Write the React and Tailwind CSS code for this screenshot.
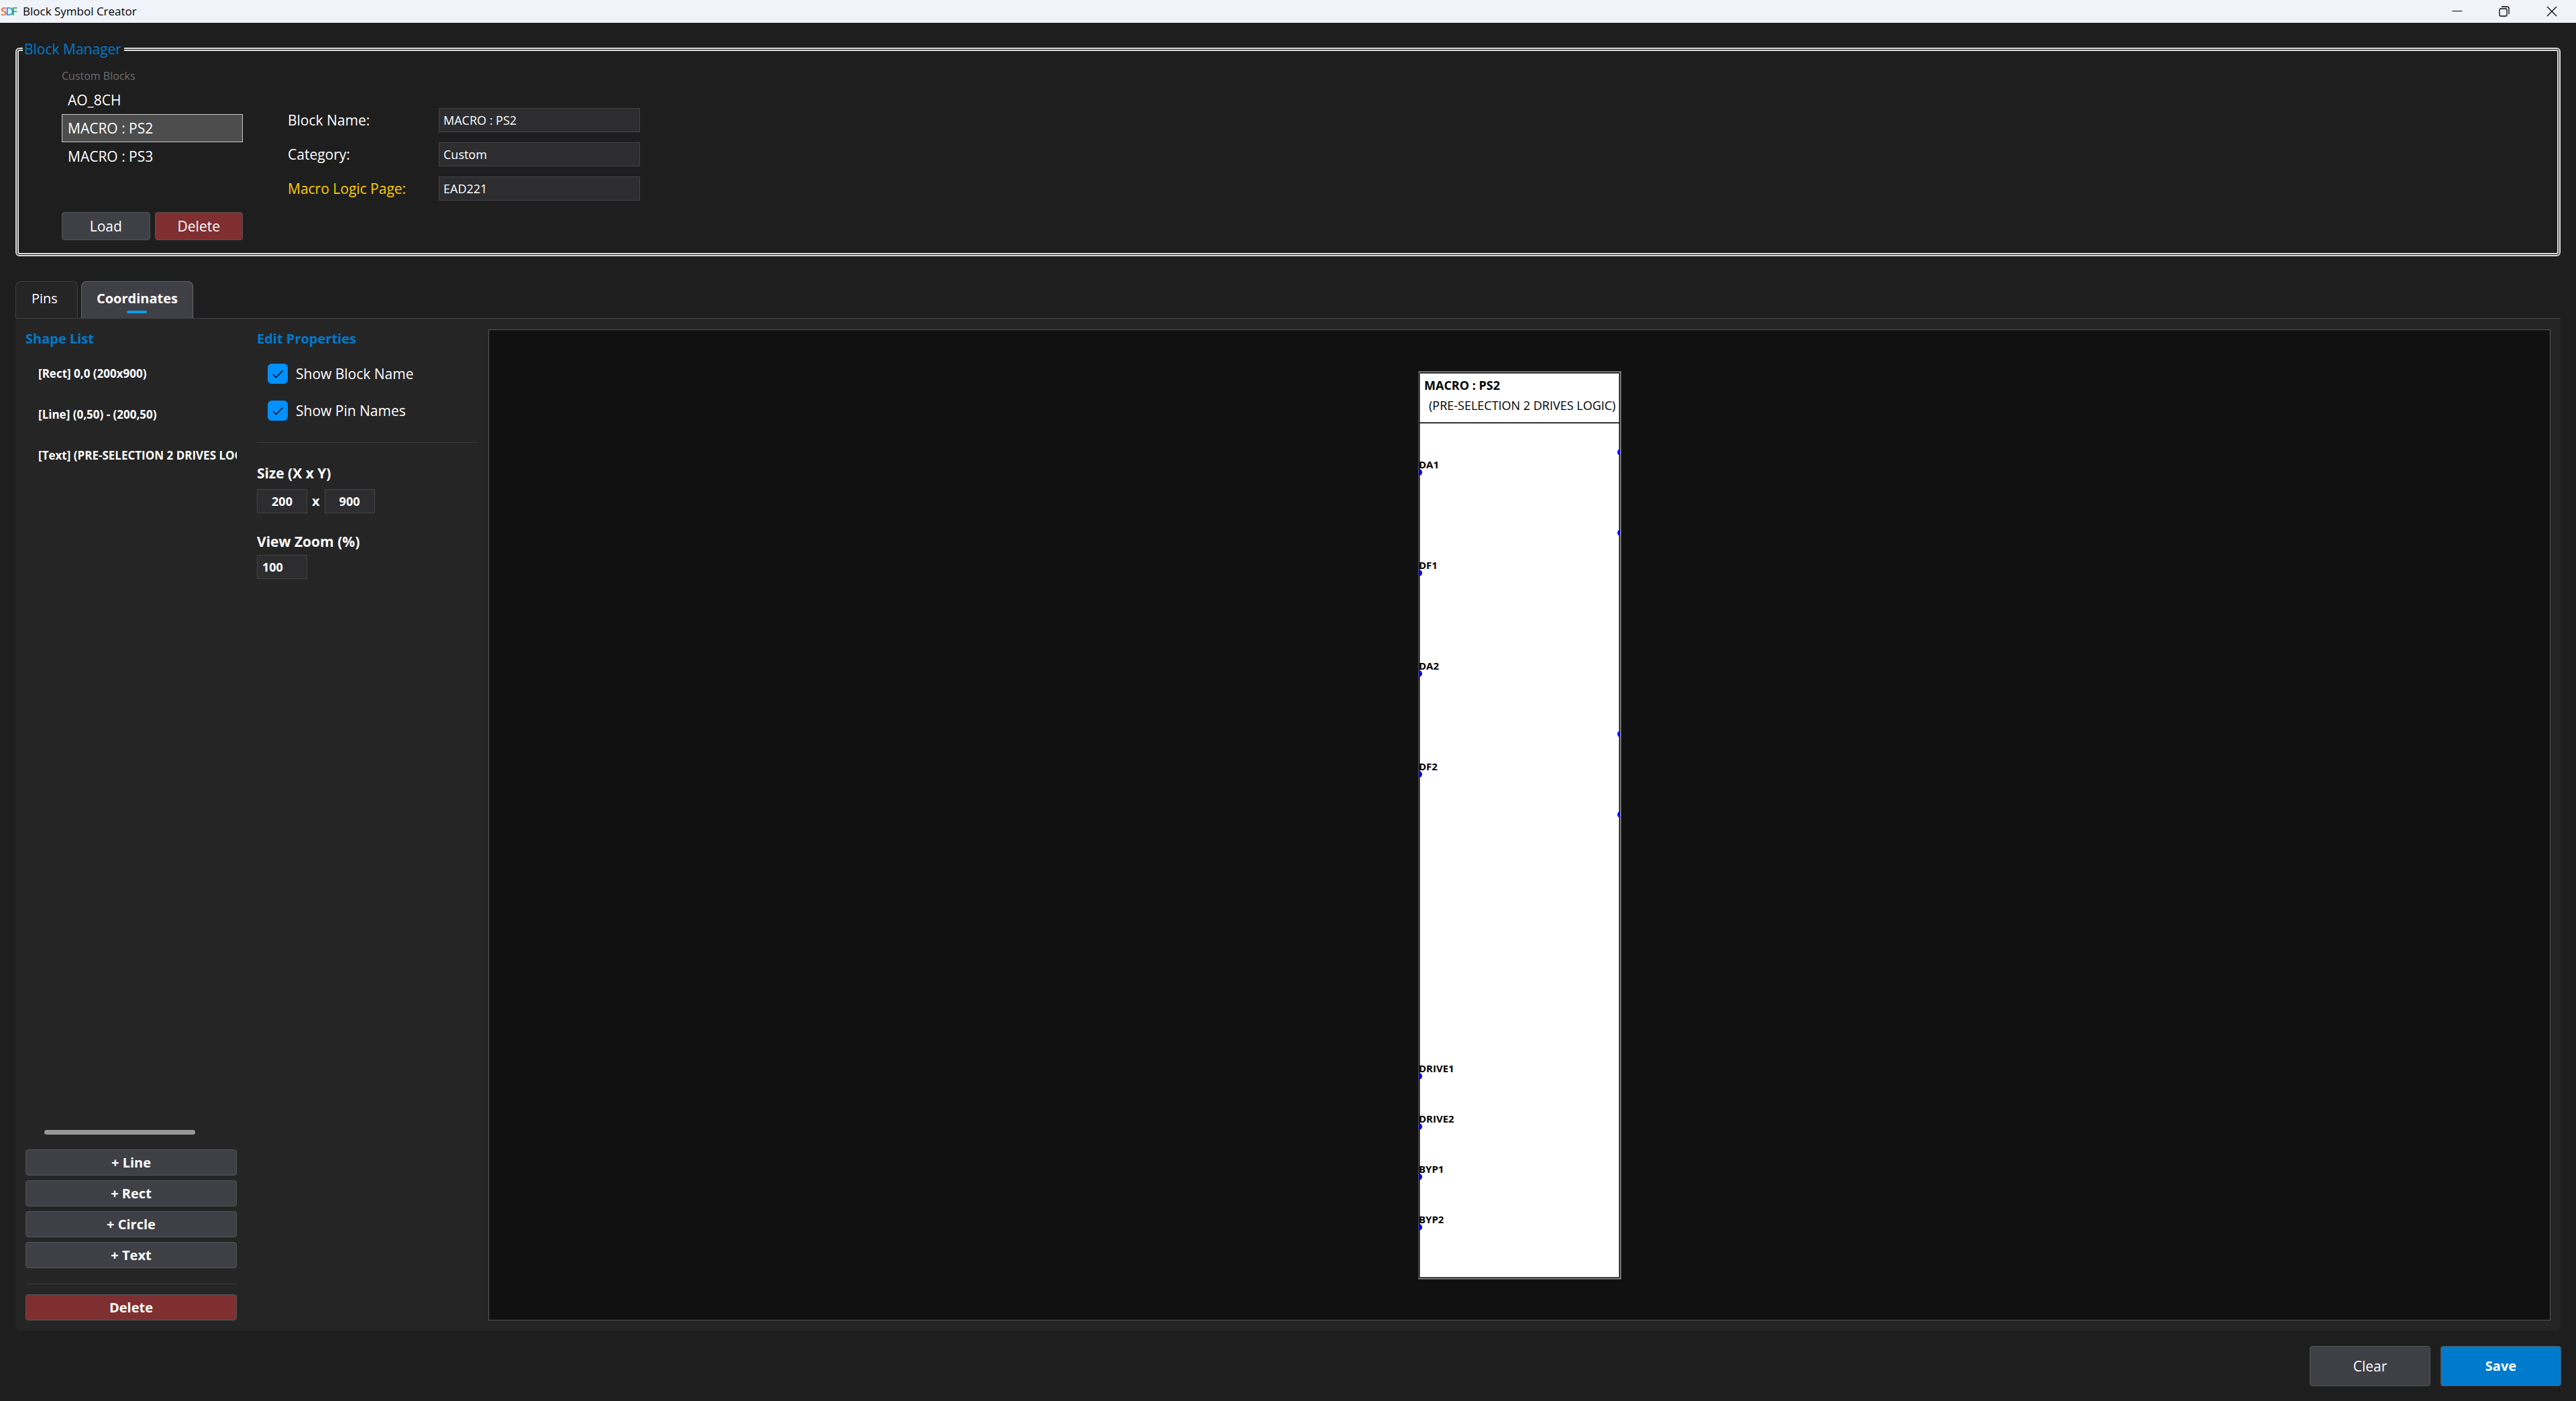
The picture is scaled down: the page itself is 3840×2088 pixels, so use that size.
import { useState } from 'react';

const SCALE = 1.5;

const blocks = ['AO_8CH', 'MACRO : PS2', 'MACRO : PS3'];

const shapes = [
  '[Rect] 0,0 (200x900)',
  '[Line] (0,50) - (200,50)',
  '[Text] (PRE-SELECTION 2 DRIVES LOGIC)',
];

const inputPins = [
  { name: 'DA1', y: 100 },
  { name: 'DF1', y: 200 },
  { name: 'DA2', y: 300 },
  { name: 'DF2', y: 400 },
  { name: 'DRIVE1', y: 700 },
  { name: 'DRIVE2', y: 750 },
  { name: 'BYP1', y: 800 },
  { name: 'BYP2', y: 850 },
];

const outputPins = [80, 160, 360, 440];

function TitleBar() {
  return (
    <header className="flex h-[34px] items-center justify-between bg-[#f0f3fa] text-black">
      <div className="flex items-center gap-1">
        <svg className="h-[34px] w-[30px]" viewBox="0 0 30 34" fontSize="17" fontWeight="600" aria-hidden="true">
          <text x="1" y="23" fill="#f07030">S</text>
          <text x="17" y="23" fill="#22b14c">F</text>
          <text x="8" y="23" fill="#2a9be8">D</text>
        </svg>
        <h1 className="text-[17px] leading-6">Block Symbol Creator</h1>
      </div>
      <div className="flex">
        <button aria-label="Minimize" className="flex h-[34px] w-[70px] items-center justify-center">
          <svg className="h-4 w-4" viewBox="0 0 16 16" fill="none" stroke="currentColor">
            <path d="M0.5 7.5h15" />
          </svg>
        </button>
        <button aria-label="Restore" className="flex h-[34px] w-[70px] items-center justify-center">
          <svg className="h-4 w-4" viewBox="0 0 16 16" fill="none" stroke="currentColor" strokeWidth="1.3">
            <rect x="1" y="4" width="11" height="11" rx="1.5" />
            <path d="M4 1h8.500a2.500 2.500 0 0 1 2.500 2.500V12" />
          </svg>
        </button>
        <button aria-label="Close" className="flex h-[34px] w-[72px] items-center justify-center">
          <svg className="h-4 w-4" viewBox="0 0 16 16" fill="none" stroke="currentColor" strokeWidth="1.3">
            <path d="M1 1l14 14M15 1L1 15" />
          </svg>
        </button>
      </div>
    </header>
  );
}

function Field({ id, label, value, labelClass }) {
  return (
    <div className="flex items-center">
      <label htmlFor={id} className={`w-[225px] text-[21px] leading-7 ${labelClass}`}>{label}</label>
      <input
        id={id}
        defaultValue={value}
        className="h-9 w-[300px] border border-[#434346] bg-[#2d2d30] px-[6px] text-lg leading-6 text-white"
      />
    </div>
  );
}

function BlockManager() {
  const [selected, setSelected] = useState('MACRO : PS2');

  return (
    <fieldset className="mx-[23px] mt-[25px] h-[323px] rounded-md border-[5px] border-double border-[#dddddd] pl-16">
      <legend className="-ml-[58px] pr-1 pl-[2px] text-[21px] leading-7 text-[#007acc]">Block Manager</legend>
      <div className="flex">
        <div className="w-[270px]">
          <h2 className="mt-[14px] mb-[3px] text-base leading-6 text-[#6d6d6d]">Custom Blocks</h2>
          <ul className="h-[188px]">
            {blocks.map((name) => (
              <li key={name}>
                <button
                  onClick={() => setSelected(name)}
                  className={`flex h-[42px] w-full items-center border px-2 text-[21px] leading-7 ${
                    selected === name ? 'border-[#c8c8c8] bg-[#4d4d4d]' : 'border-transparent'
                  }`}
                >
                  {name}
                </button>
              </li>
            ))}
          </ul>
          <div className="flex gap-[7px]">
            <button className="h-[42px] flex-1 rounded border border-[#555555] bg-[#3f3f46] text-[21px] leading-7">Load</button>
            <button className="h-[42px] flex-1 rounded border border-[#555555] bg-[#802f31] text-[21px] leading-7">Delete</button>
          </div>
        </div>
        <div className="mt-[74px] ml-[67px] flex flex-col gap-[15px]">
          <Field id="block-name" label="Block Name:" value="MACRO : PS2" labelClass="text-white" />
          <Field id="category" label="Category:" value="Custom" labelClass="text-white" />
          <Field id="macro-page" label="Macro Logic Page:" value="EAD221" labelClass="text-[#ffcc00]" />
        </div>
      </div>
    </fieldset>
  );
}

function Tabs() {
  return (
    <div role="tablist" className="mt-[37px] flex h-[55px] gap-[5px] text-xl leading-7">
      <button
        role="tab"
        aria-selected="false"
        className="flex rounded-t-lg border border-b-0 border-[#3f3f46] bg-[#252526] pt-[11px] pr-[29px] pl-[23px]"
      >
        Pins
      </button>
      <button
        role="tab"
        aria-selected="true"
        className="flex flex-col items-center rounded-t-lg border border-b-0 border-[#666666] bg-[#3f3f46] px-[22px] pt-[11px] font-bold"
      >
        Coordinates
        <span className="mt-1 h-1 w-[30px] rounded-full bg-[#0e9be8]" />
      </button>
    </div>
  );
}

function ShapeList() {
  return (
    <section className="flex w-[315px] flex-col">
      <h2 className="text-xl leading-7 font-bold text-[#007acc]">Shape List</h2>
      <ul className="mt-[7px] flex-1 overflow-hidden">
        {shapes.map((shape) => (
          <li key={shape} className="flex h-[61px] items-center pl-[19px] text-[17px] leading-6 font-bold whitespace-nowrap">
            {shape}
          </li>
        ))}
      </ul>
      <div className="mb-[22px] ml-7 h-[7px] w-[225px] rounded-full bg-[#999999]" />
      <div className="flex flex-col gap-[7px]">
        {['Line', 'Rect', 'Circle', 'Text'].map((kind) => (
          <button key={kind} className="h-[39px] rounded border border-[#555555] bg-[#3f3f46] text-xl leading-7 font-bold">
            + {kind}
          </button>
        ))}
      </div>
      <hr className="mt-[23px] mb-[15px] border-[#3a3a3a]" />
      <button className="h-[39px] rounded border border-[#555555] bg-[#802f31] text-xl leading-7 font-bold">Delete</button>
    </section>
  );
}

function CheckOption({ label }) {
  return (
    <label className="flex h-[30px] items-center gap-3 text-[21px] leading-7">
      <span className="grid">
        <input
          type="checkbox"
          defaultChecked
          className="peer col-start-1 row-start-1 h-[30px] w-[30px] appearance-none rounded-md border border-[#666666] checked:border-0 checked:bg-[#0091ff]"
        />
        <svg
          className="pointer-events-none invisible col-start-1 row-start-1 h-[30px] w-[30px] text-black peer-checked:visible"
          viewBox="0 0 30 30"
          fill="none"
          stroke="currentColor"
          strokeWidth="1.5"
        >
          <path d="M8 16l4.500 4.500L22.500 10.500" />
        </svg>
      </span>
      {label}
    </label>
  );
}

function EditProperties() {
  const inputClass = 'h-9 w-[75px] border border-[#434346] bg-[#2d2d30] text-lg leading-6 font-bold';

  return (
    <section className="ml-[30px] w-[330px]">
      <h2 className="text-xl leading-7 font-bold text-[#007acc]">Edit Properties</h2>
      <div className="mt-[23px] ml-4 flex flex-col gap-[25px]">
        <CheckOption label="Show Block Name" />
        <CheckOption label="Show Pin Names" />
      </div>
      <hr className="mt-8 border-[#3a3a3a]" />
      <h3 className="mt-[31px] text-[21px] leading-7 font-bold">Size (X x Y)</h3>
      <div className="mt-[10px] flex items-center gap-[7px]">
        <input aria-label="Width" defaultValue="200" className={`${inputClass} text-center`} />
        <span className="text-xl leading-7 font-bold">x</span>
        <input aria-label="Height" defaultValue="900" className={`${inputClass} text-center`} />
      </div>
      <label htmlFor="view-zoom" className="mt-7 block text-[21px] leading-7 font-bold">View Zoom (%)</label>
      <input id="view-zoom" defaultValue="100" className={`${inputClass} mt-[6px] px-[7px]`} />
    </section>
  );
}

function SymbolCanvas() {
  return (
    <div className="ml-[15px] flex flex-1 items-center justify-center border border-[#555555] bg-[#111111]">
      <svg width="303" height="1354" viewBox="-1 -1 303 1354" fill="#000000" role="img" aria-label="MACRO : PS2 symbol">
        <rect x="-0.5" y="-0.5" width="302" height="1353" fill="#ffffff" stroke="#555555" />
        <rect x="0.5" y="0.5" width="300" height="1351" fill="none" stroke="#999999" />
        <path d="M0.5 1.5h299v1349h-299z" fill="none" stroke="#000000" />
        <path d="M1.5 2.5h297v1347h-297z" fill="none" stroke="#808080" />
        <path d="M1 75.5h298" stroke="#666666" />
        <path d="M1 76.5h298" stroke="#000000" />
        <text x="8" y="27" fontSize="18" fontWeight="700">MACRO : PS2</text>
        <text x="15" y="57" fontSize="18">(PRE-SELECTION 2 DRIVES LOGIC)</text>
        <clipPath id="symbol-body">
          <rect width="300" height="1351" />
        </clipPath>
        {inputPins.map((pin) => (
          <g key={pin.name}>
            <text x="0" y={pin.y * SCALE - 6} fontSize="15" fontWeight="700">{pin.name}</text>
            <circle cx="0" cy={pin.y * SCALE} r="5" fill="#0000ff" clipPath="url(#symbol-body)" />
          </g>
        ))}
        {outputPins.map((y) => (
          <circle key={y} cx="301" cy={y * SCALE} r="5" fill="#0000ff" clipPath="url(#symbol-body)" />
        ))}
      </svg>
    </div>
  );
}

export default function App() {
  return (
    <div className="flex min-h-screen flex-col bg-[#1e1e1e] font-['Open_Sans','Noto_Sans',sans-serif] text-white">
      <TitleBar />
      <BlockManager />
      <main className="mx-[23px] flex flex-1 flex-col">
        <Tabs />
        <div className="flex flex-1 rounded-b-md border-t border-[#3f3f46] bg-[#252526] px-[15px] pt-4 pb-[15px]">
          <ShapeList />
          <EditProperties />
          <SymbolCanvas />
        </div>
      </main>
      <footer className="mx-[22px] mt-[23px] mb-[22px] flex justify-end gap-[15px] text-[21px] leading-7">
        <button className="h-[60px] w-[180px] rounded border border-[#555555] bg-[#3f3f46]">Clear</button>
        <button className="h-[60px] w-[180px] rounded border border-[#555555] bg-[#007acc] text-xl leading-7 font-bold">Save</button>
      </footer>
    </div>
  );
}
